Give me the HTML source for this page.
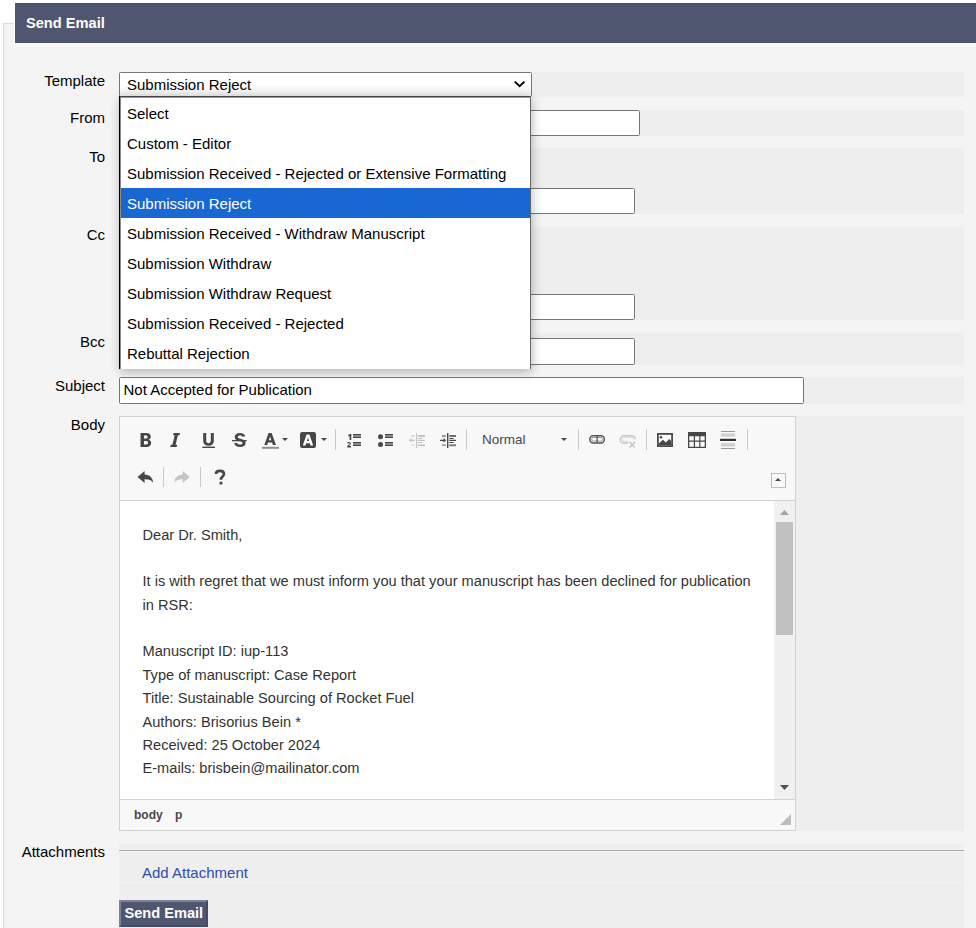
<!DOCTYPE html>
<html><head><meta charset="utf-8">
<style>
*{box-sizing:border-box}
html,body{margin:0;padding:0;background:#fff;width:976px;height:928px;overflow:hidden;position:relative;font-family:"Liberation Sans",sans-serif}
.a{position:absolute}
.panel{left:3px;top:23px;width:990px;height:920px;border:1px solid #dcdcdc;background:#f4f4f4}
.hdrw{left:14px;top:2px;width:970px;height:42px;background:#fff}
.hdr{left:15px;top:3px;width:970px;height:40px;background:#4f5670;border-top:1px solid #4a5069;border-bottom:1px solid #4a5069}
.t15{font-size:15px;line-height:17px;white-space:pre;color:#000}
.lbl{right:871px;text-align:right}
.band{left:119px;width:845px;background:#eeeeee}
.inp{background:#fff;border:1px solid #767676;border-radius:1.5px}
.pop{left:119px;top:97px;width:412px;height:272px;background:#fff;border:1px solid #000;border-bottom:0;box-shadow:3px 4px 9px rgba(0,0,0,.28)}
.item{left:8px;height:30px;width:410px}
.bt{font-size:14.625px;line-height:17px;color:#333;white-space:pre;left:142.5px}
</style></head><body>
<div class="a panel"></div>
<div class="a hdrw"></div>
<div class="a hdr"></div>
<div class="a t15" style="left:26px;top:15px;color:#fff;font-weight:bold;font-size:14.625px">Send Email</div>

<!-- bands -->
<div class="a band" style="top:72px;height:25px"></div>
<div class="a band" style="top:110px;height:26px"></div>
<div class="a band" style="top:148px;height:66px"></div>
<div class="a band" style="top:227px;height:93px"></div>
<div class="a band" style="top:333px;height:32px"></div>
<div class="a band" style="top:377px;height:27px"></div>
<div class="a band" style="top:416px;height:415px"></div>
<div class="a band" style="top:844px;height:38px"></div>
<div class="a band" style="top:883px;height:60px"></div>

<!-- labels -->
<div class="a t15 lbl" style="top:72px">Template</div>
<div class="a t15 lbl" style="top:109px">From</div>
<div class="a t15 lbl" style="top:148px">To</div>
<div class="a t15 lbl" style="top:226px">Cc</div>
<div class="a t15 lbl" style="top:333px">Bcc</div>
<div class="a t15 lbl" style="top:377px">Subject</div>
<div class="a t15 lbl" style="top:416px">Body</div>
<div class="a t15 lbl" style="top:843px">Attachments</div>

<!-- inputs -->
<div class="a inp" style="left:119px;top:72px;width:413px;height:25px;background:linear-gradient(#fff 50%,#ebebeb)"></div>
<div class="a t15" style="left:127px;top:76px">Submission Reject</div>
<div class="a inp" style="left:119px;top:110px;width:521px;height:26px"></div>
<div class="a inp" style="left:119px;top:188px;width:516px;height:26px"></div>
<div class="a inp" style="left:119px;top:294px;width:516px;height:26px"></div>
<div class="a inp" style="left:119px;top:338px;width:516px;height:27px"></div>
<div class="a inp" style="left:119px;top:377px;width:685px;height:27px"></div>
<div class="a t15" style="left:123.5px;top:381px">Not Accepted for Publication</div>

<!-- editor -->
<div class="a" style="left:119px;top:416px;width:677px;height:415px;border:1px solid #d1d1d1;background:#fff"></div>
<div class="a" style="left:120px;top:417px;width:675px;height:84px;background:#f8f8f8;border-bottom:1px solid #d1d1d1"></div>
<div class="a" style="left:120px;top:799px;width:675px;height:31px;background:#f8f8f8;border-top:1px solid #d1d1d1"></div>
<div class="a" style="left:774px;top:501px;width:21px;height:298px;background:#f0f0f0"></div>
<div class="a" style="left:776px;top:522px;width:17px;height:113px;background:#c1c1c1"></div>
<div class="a" style="left:134px;top:808px;font-size:12px;line-height:14px;font-weight:bold;color:#484848;white-space:pre">body</div>
<div class="a" style="left:175px;top:808px;font-size:12px;line-height:14px;font-weight:bold;color:#484848;white-space:pre">p</div>
<div class="a t15" style="left:482px;top:431px;font-size:13.5px;color:#484848">Normal</div>

<div class="a bt" style="top:527px">Dear Dr. Smith,</div>
<div class="a bt" style="top:573px">It is with regret that we must inform you that your manuscript has been declined for publication</div>
<div class="a bt" style="top:597px">in RSR:</div>
<div class="a bt" style="top:643px">Manuscript ID: iup-113</div>
<div class="a bt" style="top:667px">Type of manuscript: Case Report</div>
<div class="a bt" style="top:690px">Title: Sustainable Sourcing of Rocket Fuel</div>
<div class="a bt" style="top:714px">Authors: Brisorius Bein *</div>
<div class="a bt" style="top:737px">Received: 25 October 2024</div>
<div class="a bt" style="top:760px">E-mails: brisbein@mailinator.com</div>

<!-- attachments -->
<div class="a" style="left:119px;top:849px;width:845px;height:3px;background:#a6a6a6;border-top:1px solid #f5f5f5;border-bottom:1px solid #f5f5f5"></div>
<div class="a t15" style="left:142px;top:864px;color:#2d50a8">Add Attachment</div>
<div class="a" style="left:119px;top:900px;width:89px;height:27px;background:#4f5670;border:2px solid;border-color:#7d8299 #454b65 #454b65 #7d8299"></div>
<div class="a t15" style="left:124.4px;top:905px;color:#fff;font-weight:bold;font-size:14.625px">Send Email</div>

<!-- popup -->
<div class="a" style="left:119px;top:96px;width:412px;height:273px;background:#fff;box-shadow:1px 3px 10px rgba(0,0,0,.27)"></div>
<div class="a" style="left:119px;top:96px;width:412px;height:1px;background:#454545"></div>
<div class="a" style="left:120px;top:97px;width:410px;height:1px;background:#9a9a9a"></div>
<div class="a" style="left:119px;top:96px;width:1px;height:273px;background:#000"></div>
<div class="a" style="left:120px;top:97px;width:1px;height:272px;background:#8a8a8a"></div>
<div class="a" style="left:530px;top:96px;width:1px;height:273px;background:#666"></div>
<div class="a" style="left:121px;top:188px;width:409px;height:30px;background:#1967d2"></div>
<div class="a t15" style="left:127px;top:105px">Select</div>
<div class="a t15" style="left:127px;top:135px">Custom - Editor</div>
<div class="a t15" style="left:127px;top:165px">Submission Received - Rejected or Extensive Formatting</div>
<div class="a t15" style="left:127px;top:195px;color:#fff">Submission Reject</div>
<div class="a t15" style="left:127px;top:225px">Submission Received - Withdraw Manuscript</div>
<div class="a t15" style="left:127px;top:255px">Submission Withdraw</div>
<div class="a t15" style="left:127px;top:285px">Submission Withdraw Request</div>
<div class="a t15" style="left:127px;top:315px">Submission Received - Rejected</div>
<div class="a t15" style="left:127px;top:345px">Rebuttal Rejection</div>

<svg class="a" style="left:0;top:0" width="976" height="928" viewBox="0 0 976 928">
<g fill="#474747">
 <!-- B -->
 <path d="M140.5,433 H146.5 C149.5,433 150.8,434.6 150.8,436.6 C150.8,438.2 149.9,439.3 148.6,439.7 C150.3,440.1 151.2,441.4 151.2,443.1 C151.2,445.5 149.6,447 146.6,447 H140.5 Z M144,435.6 V438.6 H146 C147,438.6 147.5,438.1 147.5,437.1 C147.5,436.1 147,435.6 146,435.6 Z M144,441 V444.4 H146.3 C147.4,444.4 148,443.8 148,442.7 C148,441.6 147.4,441 146.3,441 Z" fill-rule="evenodd"/>
 <!-- I -->
 <path d="M173.6,433 H180 L179.5,435.2 H177.9 L175.6,444.8 H177.2 L176.7,447 H170.3 L170.8,444.8 H172.4 L174.7,435.2 H173.1 Z"/>
 <!-- U -->
 <path d="M203.2,433 H206.2 V440.6 C206.2,442.3 207,443.2 208.5,443.2 C210,443.2 210.8,442.3 210.8,440.6 V433 H213.8 V440.8 C213.8,444 211.8,445.8 208.5,445.8 C205.2,445.8 203.2,444 203.2,440.8 Z"/>
 <rect x="202.3" y="446.6" width="12.7" height="1.4"/>
 <!-- S -->
 <path d="M245.2,436.6 H242.2 C242,435.8 241.2,435.4 240,435.4 C238.7,435.4 237.8,436 237.8,436.9 C237.8,437.9 238.7,438.2 240.6,438.7 C243.6,439.5 245.6,440.4 245.6,443 C245.6,445.6 243.4,447 240.2,447 C236.8,447 234.6,445.6 234.2,442.9 H237.3 C237.5,444 238.6,444.6 240.2,444.6 C241.7,444.6 242.5,444 242.5,443.1 C242.5,442.1 241.6,441.7 239.4,441.1 C236.5,440.3 234.7,439.4 234.7,437 C234.7,434.6 236.9,433 240,433 C243,433 245,434.4 245.2,436.6 Z"/>
 <rect x="232" y="440" width="14.7" height="1.3"/>
 <!-- Text color A -->
 <path d="M268.6,433 H271.6 L276,445 H272.9 L272.1,442.6 H268 L267.2,445 H264.3 Z M268.8,440.3 H271.3 L270.05,436.4 Z" fill-rule="evenodd"/>
 <rect x="262" y="446.8" width="17" height="2" fill="#8f8f8f"/>
 <path d="M282,438 H288 L285,441 Z"/>
 <!-- BG color box -->
 <rect x="300" y="432" width="16" height="16" rx="2.2"/>
 <path d="M306.6,434.6 H309.4 L313.2,445.4 H310.5 L309.8,443.3 H306.2 L305.5,445.4 H302.8 Z M306.9,441.1 H309.1 L308,437.6 Z" fill="#fff" fill-rule="evenodd"/>
 <path d="M321,438 H327 L324,441 Z"/>
 <!-- numbered list -->
 <path d="M348.2,435 L350,434 H351.3 V440 H349.6 V436 L348.2,436.6 Z"/>
 <path d="M347.2,447.6 V446 L349.3,444.3 C349.8,443.9 349.8,443.3 349.2,443.1 C348.7,442.9 348.1,443.2 347.9,443.7 L347.1,443.1 C347.5,442.2 348.3,441.9 349.2,442 C350.8,442.2 351.3,443.8 350.2,444.9 L348.9,446.1 H351 V447.6 Z"/>
 <rect x="353" y="434" width="8" height="4" fill="#9a9a9a"/>
 <rect x="353" y="434" width="8" height="1.2"/>
 <rect x="353" y="436.8" width="8" height="1.2"/>
 <rect x="353" y="442" width="8" height="4" fill="#9a9a9a"/>
 <rect x="353" y="442" width="8" height="1.2"/>
 <rect x="353" y="444.8" width="8" height="1.2"/>
 <!-- bulleted list -->
 <circle cx="380.5" cy="436.7" r="2.5"/>
 <circle cx="380.5" cy="444.6" r="2.5"/>
 <rect x="385" y="434" width="8" height="4" fill="#9a9a9a"/>
 <rect x="385" y="434" width="8" height="1.2"/>
 <rect x="385" y="436.8" width="8" height="1.2"/>
 <rect x="385" y="442" width="8" height="4" fill="#9a9a9a"/>
 <rect x="385" y="442" width="8" height="1.2"/>
 <rect x="385" y="444.8" width="8" height="1.2"/>
 <!-- indent -->
 <rect x="447" y="433" width="1.4" height="15"/>
 <path d="M440,439.7 H443.5 V438 L446.2,440.3 L443.5,442.6 V440.9 H440 Z"/>
 <rect x="442" y="435" width="4" height="2" fill="#9a9a9a"/>
 <rect x="442" y="444.4" width="4" height="1.6" fill="#9a9a9a"/>
 <rect x="449.3" y="435" width="6.7" height="2" fill="#6f6f6f"/>
 <rect x="449.3" y="438" width="4.3" height="1"/>
 <rect x="449.3" y="439.8" width="6.7" height="1.2"/>
 <rect x="449.3" y="442" width="4.3" height="1"/>
 <rect x="449.3" y="444.4" width="6.7" height="1.8" fill="#6f6f6f"/>
 <!-- Normal arrow -->
 <path d="M561,438 H567 L564,441 Z"/>
 <!-- link -->
 <rect x="589.8" y="435.7" width="14.6" height="7.2" rx="3.6" fill="none" stroke="#555" stroke-width="1.5"/>
 <rect x="591.6" y="437.5" width="11" height="3.6" rx="1.8" fill="none" stroke="#9a9a9a" stroke-width="1"/>
 <rect x="592.8" y="438.8" width="8.6" height="1.2" fill="#fff"/>
 <rect x="596.6" y="436.2" width="1" height="6.2" fill="#333"/>
 <!-- image -->
 <rect x="657.9" y="433.9" width="14.2" height="12.2" fill="#fff" stroke="#4a4a4a" stroke-width="1.8"/>
 <circle cx="661" cy="437.3" r="1.3"/>
 <path d="M658.8,445.2 V443.6 L662.9,439.8 L665.9,442.6 L669.2,438.9 L671.2,441 V445.2 Z"/>
 <!-- table -->
 <path d="M688,432 H706 V448 H688 Z M689.3,436.2 V440.6 H693.8 V436.2 Z M695,436.2 V440.6 H699.2 V436.2 Z M700.4,436.2 V440.6 H704.7 V436.2 Z M689.3,441.8 V446.7 H693.8 V441.8 Z M695,441.8 V446.7 H699.2 V441.8 Z M700.4,441.8 V446.7 H704.7 V441.8 Z" fill-rule="evenodd"/>
 <!-- hr -->
 <rect x="721" y="431" width="14" height="1" fill="#9a9a9a"/>
 <rect x="721" y="433.4" width="14" height="3.2" fill="#cfcfcf"/>
 <rect x="720" y="438.8" width="16" height="2.2" fill="#333"/>
 <rect x="721" y="443" width="14" height="3.6" fill="#cfcfcf"/>
 <rect x="721" y="448" width="14" height="1" fill="#9a9a9a"/>
 <!-- undo -->
 <path d="M137.5,477 L144.6,471 V474.4 C149.6,474.6 152.8,477.4 153.2,482.8 C151.2,480 148.6,479.2 144.6,479.3 V483 Z"/>
 <!-- collapser -->
 <path d="M775,481 H781 L778,478 Z"/>
 <!-- resizer, scrollbar arrows -->
 <path d="M791,814 V825 H780 Z" fill="#bcbcbc"/>
 <path d="M780,515 H789 L784.5,510 Z" fill="#a3a3a3"/>
 <path d="M780,785 H789 L784.5,790 Z" fill="#505050"/>
 <!-- select chevron -->
 <path d="M514.8,81.6 L519.6,86.2 L524.4,81.6" fill="none" stroke="#000" stroke-width="2"/>
</g>
<g fill="#c4c4c4">
 <!-- outdent -->
 <rect x="416" y="433" width="1.2" height="15"/>
 <path d="M415,439.7 H411.5 V438 L408.8,440.3 L411.5,442.6 V440.9 H415 Z"/>
 <rect x="411" y="435" width="4" height="2" fill="#e0e0e0"/>
 <rect x="411" y="444.4" width="4" height="1.6" fill="#e0e0e0"/>
 <rect x="418" y="435" width="7" height="2"/>
 <rect x="418" y="438" width="4.5" height="1"/>
 <rect x="418" y="439.8" width="7" height="1.2"/>
 <rect x="418" y="442" width="4.5" height="1"/>
 <rect x="418" y="444.4" width="7" height="1.8"/>
 <!-- unlink -->
 <path d="M628.5,443.1 H624 A3.6,3.6 0 0 1 624,435.7 H631.6 A3.6,3.6 0 0 1 635.2,439.3" fill="none" stroke="#c4c4c4" stroke-width="1.5"/>
 <path d="M628,441.3 H624.2 A1.8,1.8 0 0 1 624.2,437.5 H631.4 A1.8,1.8 0 0 1 633.2,439.3" fill="none" stroke="#dadada" stroke-width="1"/>
 <path d="M629.6,441.8 L635,447.4 M635,441.8 L629.6,447.4" stroke="#c4c4c4" stroke-width="1.5"/>
 <!-- redo -->
 <path d="M189.8,477 L182.7,471 V474.4 C177.7,474.6 174.5,477.4 174.1,482.8 C176.1,480 178.7,479.2 182.7,479.3 V483 Z"/>
</g>
<!-- separators -->
<g fill="#c9c9c9">
 <rect x="335" y="429" width="1" height="21"/>
 <rect x="466" y="429" width="1" height="21"/>
 <rect x="578" y="429" width="1" height="21"/>
 <rect x="646" y="429" width="1" height="21"/>
 <rect x="747" y="429" width="1" height="21"/>
 <rect x="163" y="467" width="1" height="20"/>
 <rect x="200" y="467" width="1" height="20"/>
</g>
<rect x="771.5" y="473.5" width="14" height="14" fill="none" stroke="#bcbcbc" stroke-width="1"/>
<path d="M216,474 C216,471.6 217.7,470.9 219.9,470.9 C222.2,470.9 223.9,472.1 223.9,474 C223.9,476.6 220.9,476.6 220.9,479.8" fill="none" stroke="#474747" stroke-width="2.7"/><rect x="219.5" y="481.8" width="2.9" height="2.8" rx="0.6" fill="#474747"/>
</svg>
</body></html>
